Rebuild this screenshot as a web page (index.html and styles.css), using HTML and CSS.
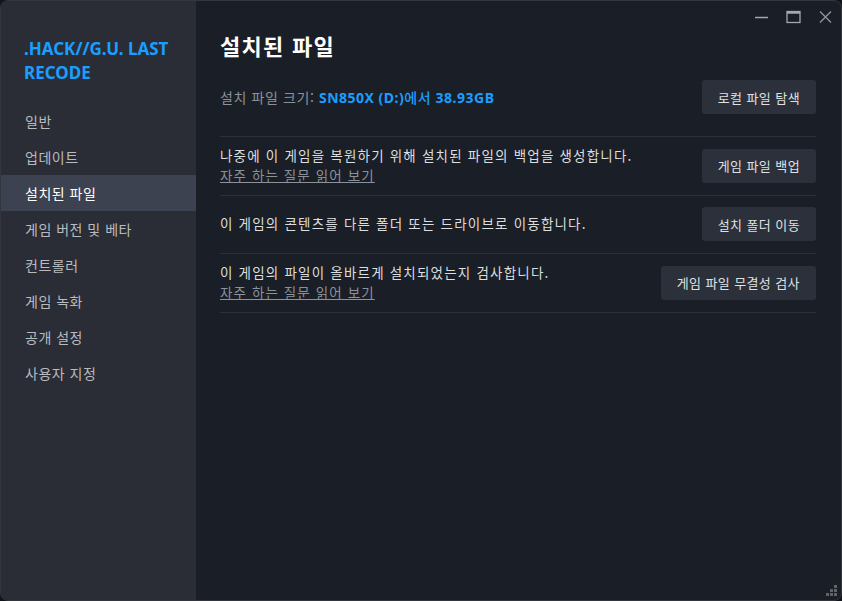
FILE: index.html
```html
<!DOCTYPE html>
<html lang="ko">
<head>
<meta charset="utf-8">
<link rel="stylesheet" href="styles.css">
</head>
<body>
<div class="window">
  <aside class="sidebar">
    <div class="game-title">.HACK//G.U. LAST RECODE</div>
    <nav class="nav">
      <div class="nav-item">일반</div>
      <div class="nav-item">업데이트</div>
      <div class="nav-item active">설치된 파일</div>
      <div class="nav-item">게임 버전 및 베타</div>
      <div class="nav-item">컨트롤러</div>
      <div class="nav-item">게임 녹화</div>
      <div class="nav-item">공개 설정</div>
      <div class="nav-item">사용자 지정</div>
    </nav>
  </aside>
  <main class="main">
    <div class="controls">
      <svg class="ctl" width="13" height="14" viewBox="0 0 13 14"><path d="M0 7.5h13" stroke="#a4a8ad" stroke-width="1.4"/></svg>
      <svg class="ctl" width="15" height="14" viewBox="0 0 15 14"><rect x="1" y="1.5" width="13" height="11" fill="none" stroke="#a4a8ad" stroke-width="1.3"/><path d="M1 2.6h13" stroke="#a4a8ad" stroke-width="2.2"/></svg>
      <svg class="ctl" width="13" height="14" viewBox="0 0 13 14"><path d="M1 1.5l11 11M12 1.5l-11 11" stroke="#8f959b" stroke-width="1.4"/></svg>
    </div>
    <h1 class="page-title">설치된 파일</h1>
    <div class="size-row">
      <div class="size-text">설치 파일 크기: <span class="hl">SN850X (D:)</span><span class="hl kr">에서</span> <span class="hl">38.93GB</span></div>
      <button class="btn">로컬 파일 탐색</button>
    </div>
    <div class="rows">
      <div class="row">
        <div class="desc">
          <div>나중에 이 게임을 복원하기 위해 설치된 파일의 백업을 생성합니다.</div>
          <a class="faq">자주 하는 질문 읽어 보기</a>
        </div>
        <button class="btn">게임 파일 백업</button>
      </div>
      <div class="row">
        <div class="desc">
          <div>이 게임의 콘텐츠를 다른 폴더 또는 드라이브로 이동합니다.</div>
        </div>
        <button class="btn">설치 폴더 이동</button>
      </div>
      <div class="row">
        <div class="desc">
          <div>이 게임의 파일이 올바르게 설치되었는지 검사합니다.</div>
          <a class="faq">자주 하는 질문 읽어 보기</a>
        </div>
        <button class="btn">게임 파일 무결성 검사</button>
      </div>
    </div>
    <svg class="grip" width="12" height="12" viewBox="0 0 12 12" fill="#5f6368">
      <rect x="8" y="0" width="3" height="3"/>
      <rect x="4" y="4" width="3" height="3"/><rect x="8" y="4" width="3" height="3"/>
      <rect x="0" y="8" width="3" height="3"/><rect x="4" y="8" width="3" height="3"/><rect x="8" y="8" width="3" height="3"/>
    </svg>
  </main>
</div>
</body>
</html>
```
FILE: styles.css
```css
* { box-sizing: border-box; }
html, body {
  margin: 0;
  height: 100%;
  background: #121419;
}
body {
  font-family: "Noto Sans", "Noto Sans CJK KR", sans-serif;
  color: #dcdedf;
}
.window {
  height: 601px;
  width: 842px;
  display: flex;
  border-radius: 8px;
  overflow: hidden;
  border: 1px solid #33363d;
  background: #1a1e26;
}
.sidebar {
  width: 195px;
  flex: none;
  background: #2a2d35;
  padding-top: 36px;
}
.game-title {
  color: #1a9fff;
  font-weight: 700;
  font-size: 17px;
  line-height: 24px;
  padding: 0 16px 0 23px;
}
.nav {
  margin-top: 18px;
  display: flex;
  flex-direction: column;
}
.nav-item {
  height: 36px;
  display: flex;
  align-items: center;
  padding-left: 24px;
  font-size: 14px;
  letter-spacing: 0.5px;
  color: #b8bcc0;
  font-family: "Noto Sans CJK KR", sans-serif;
}
.nav-item.active {
  background: #3d4250;
  color: #ffffff;
}
.main {
  flex: 1;
  position: relative;
  padding: 26px 25px 0 24px;
}
.controls {
  position: absolute;
  top: 9px;
  right: 9px;
  display: flex;
  gap: 18px;
  align-items: center;
}
.page-title {
  margin: 0;
  font-family: "Noto Sans CJK KR", sans-serif;
  font-size: 22px;
  letter-spacing: 1.3px;
  font-weight: 700;
  color: #ffffff;
  line-height: 36px;
}
.size-row {
  margin-top: 17px;
  display: flex;
  align-items: center;
  justify-content: space-between;
  padding-bottom: 22px;
  border-bottom: 1px solid #2d313a;
}
.size-text {
  font-size: 14px;
  letter-spacing: 0.6px;
  color: #8b9299;
  font-family: "Noto Sans CJK KR", sans-serif;
}
.hl {
  color: #1a9fff;
  font-weight: 700;
  letter-spacing: 0.5px;
  font-family: "Noto Sans", "Noto Sans CJK KR", sans-serif;
}
.hl.kr { font-family: "Noto Sans CJK KR", sans-serif; font-weight: 500; }
.btn {
  background: #2c303a;
  border: none;
  border-radius: 3px;
  color: #dfe1e3;
  font-family: "Noto Sans CJK KR", sans-serif;
  font-size: 13px;
  letter-spacing: 0.4px;
  height: 34px;
  padding: 0 16px;
}
.row {
  display: flex;
  align-items: center;
  justify-content: space-between;
  height: 58.5px;
  border-bottom: 1px solid #2d313a;
}
.desc {
  font-family: "Noto Sans CJK KR", sans-serif;
  font-size: 13.5px;
  letter-spacing: 1.2px;
  color: #dcdedf;
  line-height: 19.6px;
}
.faq {
  display: inline-block;
  color: #8b9299;
  text-decoration: underline;
  letter-spacing: 1.1px;
}
.grip {
  position: absolute;
  right: 3px;
  bottom: 3px;
}
```
